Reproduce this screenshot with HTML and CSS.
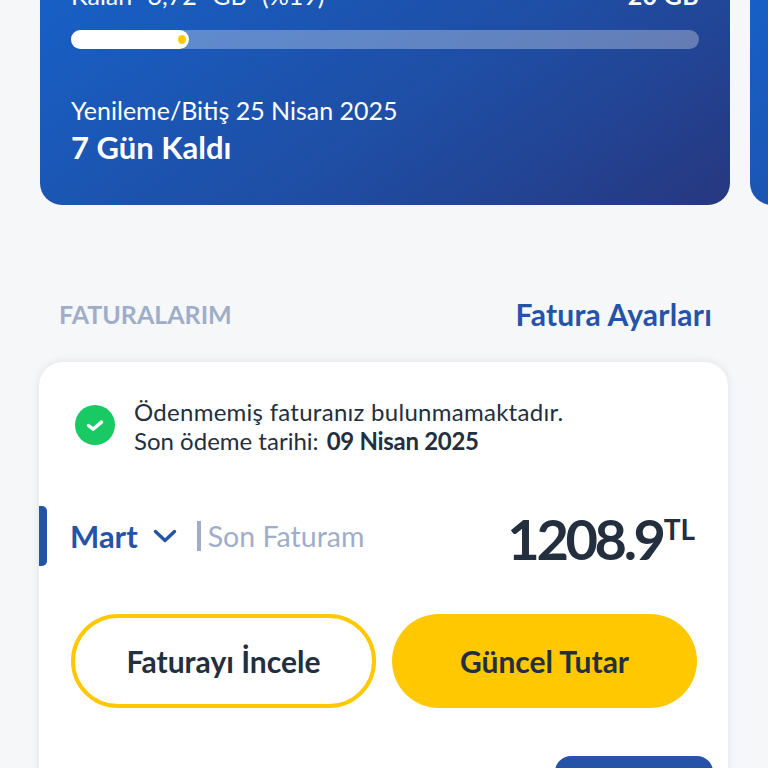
FILE: index.html
```html
<!DOCTYPE html>
<html lang="tr">
<head>
<meta charset="utf-8">
<title>Faturalarım</title>
<link rel="stylesheet" href="styles.css">
</head>
<body>
<div class="page">
  <div class="carousel">
    <section class="usage-card">
      <div class="usage-head"><span>Kalan 3,72 GB (%19)</span><strong>20 GB</strong></div>
      <div class="bar"><div class="bar-fill"><span class="bar-dot"></span></div></div>
      <p class="renew">Yenileme/Bitiş 25 Nisan 2025</p>
      <p class="left">7 Gün Kaldı</p>
    </section>
    <section class="usage-card next"></section>
  </div>
  <div class="section-head">
    <h2>FATURALARIM</h2>
    <a>Fatura Ayarları</a>
  </div>
  <section class="bill-card">
    <div class="notice">
      <svg class="check" viewBox="0 0 40 40" width="40" height="40"><circle cx="20" cy="20" r="20" fill="#19c964"/><path d="M13.5 20.5l4.6 3.6 8.4-7" fill="none" stroke="#fff" stroke-width="3.4" stroke-linecap="round" stroke-linejoin="round"/></svg>
      <p><span class="line-one">Ödenmemiş faturanız bulunmamaktadır.</span><br>Son ödeme tarihi: <b>09 Nisan 2025</b></p>
    </div>
    <div class="bill-row">
      <span class="marker"></span>
      <span class="month">Mart</span>
      <svg class="chev" viewBox="0 0 24 14" width="24" height="14"><path d="M2.5 2.5l9.5 9 9.5-9" fill="none" stroke="#2453a8" stroke-width="3.4" stroke-linecap="round" stroke-linejoin="round"/></svg>
      <span class="last">Son Faturam</span>
      <span class="amount">1208.9<sup>TL</sup></span>
    </div>
    <div class="actions">
      <button class="btn outline">Faturayı İncele</button>
      <button class="btn solid">Güncel Tutar</button>
    </div>
    <div class="more"><span class="pay"></span></div>
  </section>
</div>
</body>
</html>
```
FILE: styles.css
```css
html, body { margin: 0; height: 768px; overflow: hidden; background: #f5f7f9; }
body { font-family: Lato, "Noto Sans", sans-serif; color: #232f3e; }
.page { margin-top: -70px; }
.carousel { display: flex; gap: 20px; padding-left: 40px; overflow: hidden; }
.usage-card {
  flex: 0 0 690px; box-sizing: border-box; height: 275px; padding: 50px 31px 0 31px;
  border-radius: 0 0 22px 22px; color: #fff;
  background: linear-gradient(145deg, #1663cc 0%, #1f4da3 60%, #27377f 100%);
}
.usage-head { display: flex; justify-content: space-between; font-size: 25px; line-height: 30px; height: 30px; }
.usage-head span { word-spacing: 9px; }
.usage-head strong { font-weight: 700; letter-spacing: .3px; }
.bar { height: 19px; margin-top: 20px; border-radius: 10px; background: rgba(255,255,255,.3); }
.bar-fill { position: relative; width: 118px; height: 19px; border-radius: 10px; background: #fff; }
.bar-dot { position: absolute; right: 3px; top: 5px; width: 8px; height: 9px; border-radius: 50%; background: #ffc800; }
.renew { margin: 44px 0 0; font-size: 25px; line-height: 34px; }
.left { margin: 1px 0 0; font-size: 31px; line-height: 38px; font-weight: 700; }
.section-head { display: flex; justify-content: space-between; align-items: center; padding: 91px 56px 0 59px; height: 36px; }
.section-head h2 { margin: 0; font-size: 25px; font-weight: 700; color: #a0adc9; }
.section-head a { font-size: 30px; font-weight: 700; letter-spacing: .2px; color: #2453a8; }
.bill-card {
  position: relative; box-sizing: border-box; width: 689px; height: 500px; margin: 30px 0 0 39px;
  padding: 36px 32px 0; border-radius: 24px; background: #fff; box-shadow: 0 0 8px rgba(30,50,90,.1);
}
.notice { display: flex; align-items: center; gap: 19px; padding-left: 4px; }
.check { flex: none; margin-bottom: 3px; }
.notice p { margin: 0; font-size: 24px; line-height: 28.5px; }
.line-one { letter-spacing: .27px; }
.notice b { margin-left: 2px; letter-spacing: -.3px; }
.bill-row { display: flex; align-items: center; margin-top: 51px; height: 60px; }
.marker { position: absolute; left: 0; width: 8px; height: 60px; border-radius: 0 5px 5px 0; background: #2453a8; }
.month { margin-left: -1px; font-size: 31px; font-weight: 700; color: #2453a8; }
.chev { margin-left: 15px; }
.last { margin-left: 20px; padding-left: 7px; border-left: 4px solid #a0adc9; font-size: 28.5px; line-height: 30px; color: #a0adc9; }
.amount { margin-left: auto; margin-right: 1px; padding-top: 5px; font-size: 56px; font-weight: 700; letter-spacing: -3.4px; }
.amount sup { margin-left: 1px; font-size: 28px; vertical-align: 20px; line-height: 0; letter-spacing: 0; }
.actions { display: flex; gap: 16px; margin-top: 48px; }
.btn { flex: 0 0 305px; height: 94px; box-sizing: border-box; border-radius: 47px; font: 700 30px Lato, sans-serif; color: #232f3e; }
.outline { background: #fff; border: 4px solid #ffc800; }
.solid { background: #ffc800; border: 0; }
.more { display: flex; justify-content: flex-end; margin-top: 48px; margin-right: -17px; }
.pay { width: 158px; height: 60px; border-radius: 16px; background: #2453a8; }
```
